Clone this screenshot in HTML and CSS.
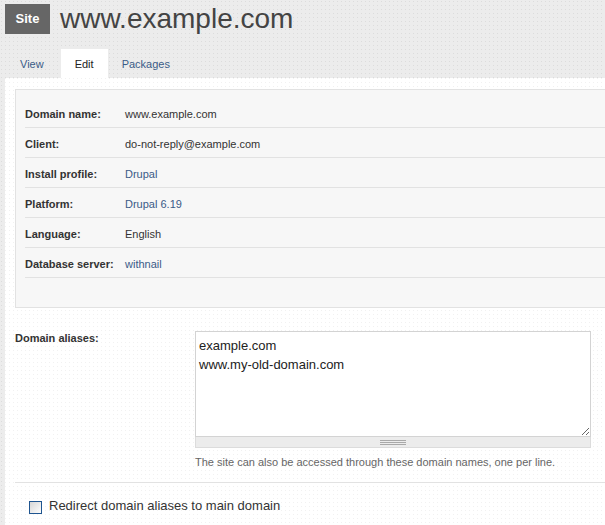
FILE: index.html
```html
<!DOCTYPE html>
<html lang="en">
<head>
<meta charset="utf-8">
<title>www.example.com</title>
<link rel="stylesheet" href="styles.css">
</head>
<body>
<div class="page">
  <header class="header">
    <span class="badge">Site</span>
    <h1 class="title">www.example.com</h1>
  </header>
  <nav class="tabs">
    <a class="tab" href="#">View</a>
    <a class="tab tab-active" href="#">Edit</a>
    <a class="tab" href="#">Packages</a>
  </nav>
  <main class="content">
    <div class="info">
      <div class="row"><span class="label">Domain name:</span><span class="value">www.example.com</span></div>
      <div class="row"><span class="label">Client:</span><span class="value">do-not-reply@example.com</span></div>
      <div class="row"><span class="label">Install profile:</span><a class="value link" href="#">Drupal</a></div>
      <div class="row"><span class="label">Platform:</span><a class="value link" href="#">Drupal 6.19</a></div>
      <div class="row"><span class="label">Language:</span><span class="value">English</span></div>
      <div class="row"><span class="label">Database server:</span><a class="value link" href="#">withnail</a></div>
    </div>
    <div class="form-item">
      <label class="form-label" for="aliases">Domain aliases:</label>
      <div class="field">
        <textarea id="aliases" class="aliases">example.com
www.my-old-domain.com</textarea>
        <div class="grippie"><span class="grip"></span></div>
        <div class="desc">The site can also be accessed through these domain names, one per line.</div>
      </div>
    </div>
    <hr class="sep">
    <div class="check-row">
      <input type="checkbox" id="redirect" class="check">
      <label for="redirect" class="check-label">Redirect domain aliases to main domain</label>
    </div>
  </main>
</div>
</body>
</html>
```
FILE: styles.css
```css
html, body {
  margin: 0;
  padding: 0;
}
body {
  width: 605px;
  height: 525px;
  overflow: hidden;
  font-family: "Liberation Sans", Arial, sans-serif;
  background-color: #ececec;
  background-image:
    linear-gradient(to bottom, transparent 1px, #ececec 1px),
    linear-gradient(to right, #dcdcdc 1px, #ececec 1px);
  background-size: 4px 4px;
  background-position: 1px 1px;
}
.header {
  display: flex;
  align-items: center;
  padding: 4px 5px 0;
  height: 30px;
}
.badge {
  display: block;
  height: 30px;
  line-height: 30px;
  padding: 0 10px;
  background: #666;
  color: #fff;
  font-weight: bold;
  font-size: 13px;
  width: 25px;
  text-align: center;
}
.title {
  margin: 0 0 0 10px;
  font-size: 28px;
  font-weight: normal;
  color: #444;
  line-height: 28px;
}
.tabs {
  display: flex;
  margin-top: 15px;
  padding-left: 6px;
  height: 29px;
}
.tab {
  display: block;
  height: 28px;
  padding: 1px 14px 0;
  line-height: 29px;
  font-size: 11px;
  color: #3a5b87;
  text-decoration: none;
  overflow: hidden;
}
.tab-active {
  background: #fff;
  color: #222;
  margin-left: 3px;
}
.content {
  margin-left: 5px;
  height: 450px;
  padding: 11px 0 0 10px;
  background-color: #fff;
  background-image:
    linear-gradient(to bottom, transparent 1px, #fff 1px),
    linear-gradient(to right, #f1f1f1 1px, #fff 1px);
  background-size: 4px 4px;
}
.info {
  background: #f7f7f7;
  border: 1px solid #e2e2e2;
  border-right: 0;
  padding: 8px 0 29px 9px;
}
.row {
  display: flex;
  height: 26px;
  padding-top: 3px;
  line-height: 26px;
  border-bottom: 1px solid #e2e2e2;
  font-size: 11px;
  color: #333;
}
.label {
  width: 100px;
  font-weight: bold;
}
.link {
  color: #3a5b87;
  text-decoration: none;
}
.form-item {
  display: flex;
  margin-top: 23px;
}
.form-label {
  width: 180px;
  font-size: 11px;
  font-weight: bold;
  color: #333;
  line-height: 14px;
}
.field {
  width: 396px;
}
.aliases {
  display: block;
  box-sizing: border-box;
  width: 396px;
  height: 106px;
  margin: 0;
  padding: 4px 3px;
  border: 1px solid #d3d3d3;
  font-family: "Liberation Sans", Arial, sans-serif;
  font-size: 13px;
  line-height: 19px;
  color: #222;
  background: #fff;
  resize: vertical;
  overflow: hidden;
  outline: none;
}
.grippie {
  display: flex;
  justify-content: center;
  height: 7px;
  padding-top: 3px;
  background: #ececec;
  border: 1px solid #dcdcdc;
  border-top: 0;
}
.grip {
  display: block;
  width: 26px;
  height: 5px;
  background: linear-gradient(#a9a9a9 1px, transparent 1px) 0 0 / 100% 2px;
}
.desc {
  margin-top: 7px;
  font-size: 11px;
  line-height: 14px;
  color: #666;
}
.sep {
  margin: 13px 0 0;
  border: 0;
  border-top: 1px solid #e2e2e2;
  height: 0;
}
.check-row {
  display: flex;
  align-items: flex-start;
  margin-top: 15px;
  padding-left: 14px;
}
.check {
  appearance: none;
  -webkit-appearance: none;
  box-sizing: border-box;
  width: 13px;
  height: 13px;
  margin: 3px 7px 0 0;
  border: 1px solid #1f5590;
  background: linear-gradient(135deg, #d6d6d6, #fdfdfd);
}
.check-label {
  font-size: 13px;
  line-height: 16px;
  color: #333;
}
```
